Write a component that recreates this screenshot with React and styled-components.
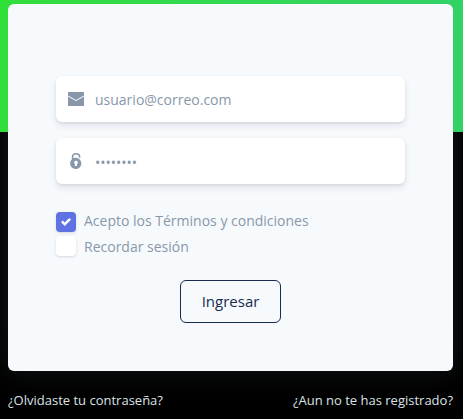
import React from "react";
import styled, { createGlobalStyle } from "styled-components";

const GlobalStyle = createGlobalStyle`
  *, *::before, *::after { box-sizing: border-box; }
  body {
    margin: 0;
    background: #000;
    color: #8898aa;
    font-family: "Open Sans", sans-serif;
    font-size: 14px;
    line-height: 20px;
  }
`;

const Page = styled.main`
  min-height: 100vh;
  padding: 4px 10px 8px 8px;
  background: linear-gradient(87deg, #2de335, #2fd564) top / 100% 132px no-repeat, #000;
`;

const Card = styled.form`
  display: flex;
  flex-direction: column;
  padding: 72px 48px 48px;
  border-radius: 6px;
  background: #f7fafc;
  box-shadow: 0 0 32px rgba(136, 152, 170, 0.15);
`;

const Field = styled.label`
  display: flex;
  align-items: center;
  height: 46px;
  margin-bottom: 16px;
  padding: 0 12px;
  border-radius: 6px;
  background: #fff;
  box-shadow: 0 4px 6px rgba(50, 50, 93, 0.11), 0 1px 3px rgba(0, 0, 0, 0.08);
`;

const FieldIcon = styled.svg`
  flex: none;
  width: 16px;
  height: 16px;
  fill: #8898aa;
`;

const Input = styled.input`
  flex: 1;
  min-width: 0;
  margin-left: 11px;
  padding: 2px 0 0;
  border: 0;
  outline: 0;
  background: transparent;
  color: #8898aa;
  font: inherit;

  &[type="password"] { padding-top: 4px; }
  &::placeholder { color: #8898aa; opacity: 1; }
`;

const Options = styled.div`
  display: grid;
  gap: 4px;
  margin: 11px 0 23px;
`;

const Option = styled.label`
  display: grid;
  grid-template-columns: 20px 1fr;
  column-gap: 8px;
  height: 21px;
  align-items: ${({ $textLow }) => ($textLow ? "start" : "end")};

  > :last-child { align-self: ${({ $textLow }) => ($textLow ? "end" : "start")}; }
`;

const CheckSlot = styled.span`
  display: grid;
  width: 20px;
  height: 20px;

  > * { grid-area: 1 / 1; }
`;

const Checkbox = styled.input`
  appearance: none;
  width: 20px;
  height: 20px;
  margin: 0;
  border-radius: 4px;
  background: #fff;
  box-shadow: 0 1px 3px rgba(50, 50, 93, 0.15), 0 1px 0 rgba(0, 0, 0, 0.02);

  &:checked { background: #5e72e4; }
  &:checked + svg { visibility: visible; }
`;

const Tick = styled.svg`
  place-self: center;
  width: 10px;
  height: 10px;
  fill: #fff;
  visibility: hidden;
  pointer-events: none;
`;

const OptionText = styled.span`
  line-height: 20px;
`;

const Submit = styled.button`
  align-self: center;
  height: 43px;
  padding: 0 21px;
  border: 1px solid #172b4d;
  border-radius: 6px;
  background: transparent;
  color: #172b4d;
  font: 500 15px/21px "Open Sans", sans-serif;
  cursor: pointer;
`;

const Links = styled.nav`
  display: flex;
  justify-content: space-between;
  margin-top: 19px;
`;

const FooterLink = styled.a`
  color: #dee2e6;
  font-size: 13px;
  text-decoration: none;
`;

function CheckOption({ children, textLow, ...props }) {
  return (
    <Option $textLow={textLow}>
      <CheckSlot>
        <Checkbox type="checkbox" {...props} />
        <Tick viewBox="0 0 8 8" aria-hidden="true">
          <path d="M6.564.75l-3.59 3.612-1.538-1.55L0 4.26 2.974 7.25 8 2.193z" />
        </Tick>
      </CheckSlot>
      <OptionText>{children}</OptionText>
    </Option>
  );
}

export default function App() {
  return (
    <>
      <GlobalStyle />
      <Page>
        <Card onSubmit={(event) => event.preventDefault()}>
          <Field>
            <FieldIcon viewBox="0 0 16 16" aria-hidden="true">
              <path d="M0 1h16v3.4L8 9 0 4.4zM0 5.4l8 4.6 8-4.6V15H0z" />
            </FieldIcon>
            <Input type="email" aria-label="Correo" placeholder="usuario@correo.com" />
          </Field>
          <Field>
            <FieldIcon viewBox="0 0 16 16" aria-hidden="true">
              <path
                fillRule="evenodd"
                d="M3.8 6.4V3.8C3.8 1.4 5.6 0 8.1 0s4.3 1.4 4.3 3.6v1.2h-1.6V3.7c0-1.4-1-2.2-2.7-2.2S5.4 2.4 5.4 3.8v1.5A5.6 5.6 0 1 1 3.8 6.4zM8 7.8a1.8 1.8 0 0 0-1 3.3v2h2v-2a1.8 1.8 0 0 0-1-3.3z"
              />
            </FieldIcon>
            <Input type="password" aria-label="Contraseña" defaultValue="password" />
          </Field>
          <Options>
            <CheckOption defaultChecked>Acepto los Términos y condiciones</CheckOption>
            <CheckOption textLow>Recordar sesión</CheckOption>
          </Options>
          <Submit type="submit">Ingresar</Submit>
        </Card>
        <Links>
          <FooterLink href="#recuperar">¿Olvidaste tu contraseña?</FooterLink>
          <FooterLink href="#registro">¿Aun no te has registrado?</FooterLink>
        </Links>
      </Page>
    </>
  );
}
